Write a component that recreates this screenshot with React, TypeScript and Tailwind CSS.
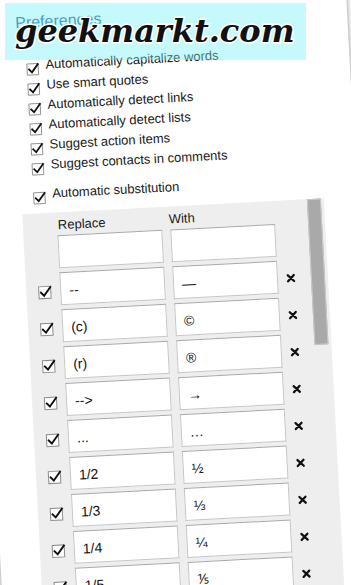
import React from "react";

function Check({ size = 13 }: { size?: number }) {
  return (
    <svg width={size + 3} height={size + 3} viewBox="0 0 16 16" className="shrink-0 overflow-visible">
      <rect x="1.5" y="2.5" width="12" height="12" fill="#fff" stroke="#8e8e8e" strokeWidth="1" />
      <path d="M3.6 8.4 L6.6 11.6 L13.2 3.2" fill="none" stroke="#111" strokeWidth="1.9" strokeLinecap="square" />
    </svg>
  );
}

function Close() {
  return (
    <svg width="10" height="10" viewBox="0 0 10 10">
      <path d="M2 2 L8 8 M8 2 L2 8" stroke="#111" strokeWidth="2.3" strokeLinecap="round" />
    </svg>
  );
}

const options = [
  "Automatically capitalize words",
  "Use smart quotes",
  "Automatically detect links",
  "Automatically detect lists",
  "Suggest action items",
  "Suggest contacts in comments",
];

const rows: [string, string][] = [
  ["--", "\u2014"],
  ["(c)", "\u00a9"],
  ["(r)", "\u00ae"],
  ["-->", "\u2192"],
  ["...", "\u2026"],
  ["1/2", "\u00bd"],
  ["1/3", "\u2153"],
  ["1/4", "\u00bc"],
  ["1/5", "\u2155"],
  ["1/6", "\u2159"],
];

function Field({ value }: { value: string }) {
  return (
    <div className="w-[105px] h-[33px] bg-white border border-[#c6c6c6] border-t-[#a8a8a8] flex items-center pl-[8px] pt-[3px] text-[14px] text-[#111] leading-none">
      {value}
    </div>
  );
}

export default function App() {
  return (
    <div className="relative w-[351px] h-[585px] overflow-hidden bg-white font-['Liberation_Sans',Arial,sans-serif]">
      <div className="ml-[-29px] mt-[-40px] w-[375px] h-[720px] bg-white origin-[29px_40px] -rotate-3 shadow-[0_0_4px_1px_rgba(0,0,0,0.35)] pl-[29px] pt-[40px]">
        <div className="w-[346px]">
          <div className="ml-[14px] mt-[14px] text-[16px] leading-[20px] text-[#2f63a3]">Preferences</div>
          <div className="mt-[23px] ml-[22px] flex flex-col">
            {options.map((o) => (
              <div key={o} className="h-5 flex items-start">
                <div className="mt-[6px] w-[16px]">
                  <Check size={12} />
                </div>
                <span className="ml-[4px] text-[13px] leading-[20px] text-[#1a1a1a]">{o}</span>
              </div>
            ))}
            <div className="h-5 flex items-start mt-[9px]">
              <div className="mt-[6px] w-[16px]">
                <Check size={12} />
              </div>
              <span className="ml-[4px] text-[13px] leading-[20px] text-[#1a1a1a]">Automatic substitution</span>
            </div>
          </div>
          <div className="mt-[9px] ml-[11px] w-[302px] bg-[#eeeeee] flex">
            <div className="flex-1 pt-[5px] pb-[10px]">
              <div className="flex h-[16px] pl-[35px] text-[13px] leading-[16px] text-[#1a1a1a]">
                <span className="w-[111px]">Replace</span>
                <span>With</span>
              </div>
              <div className="mt-[2px] flex flex-col gap-[4px] pl-[11px]">
                <div className="flex items-center h-[33px]">
                  <div className="w-[14px]" />
                  <div className="ml-[9px]">
                    <Field value="" />
                  </div>
                  <div className="ml-[8px]">
                    <Field value="" />
                  </div>
                </div>
                {rows.map(([a, b]) => (
                  <div key={a} className="flex items-center h-[33px]">
                    <div className="w-[14px] mt-[4px] flex">
                      <Check size={13} />
                    </div>
                    <div className="ml-[9px]">
                      <Field value={a} />
                    </div>
                    <div className="ml-[8px]">
                      <Field value={b} />
                    </div>
                    <div className="ml-[8px] mt-[2px] flex">
                      <Close />
                    </div>
                  </div>
                ))}
              </div>
            </div>
            <div className="w-[18px] pl-[1px]">
              <div className="w-[14px] h-[146px] bg-[#a9a9a9] border border-[#c9c9c9]" />
            </div>
          </div>
        </div>
      </div>
      <div className="absolute left-[5px] top-[3px] w-[301px] h-[57px] bg-[rgba(120,240,245,0.42)] pl-[10px] pt-[12px]">
        <span className="font-['DejaVu_Serif',serif] font-bold italic text-[32px] leading-none text-[#111] [-webkit-text-stroke:3px_#fff] [paint-order:stroke_fill] whitespace-nowrap">
          geekmarkt.com
        </span>
      </div>
    </div>
  );
}
